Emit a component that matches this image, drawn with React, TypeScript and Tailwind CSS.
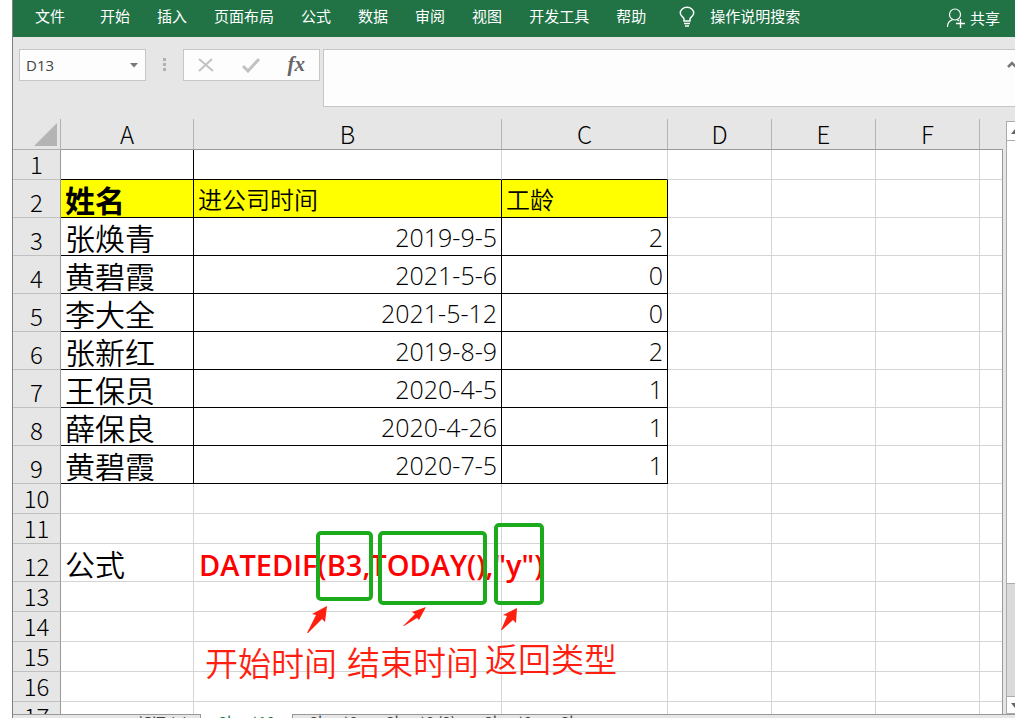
import React from 'react';

type Row = { n: number; cells?: string[]; kind?: 'head' | 'data' | 'formula' };

const menu = ['文件', '开始', '插入', '页面布局', '公式', '数据', '审阅', '视图', '开发工具', '帮助'];

const rows: Row[] = [
  { n: 1 },
  { n: 2, kind: 'head', cells: ['姓名', '进公司时间', '工龄'] },
  { n: 3, kind: 'data', cells: ['张焕青', '2019-9-5', '2'] },
  { n: 4, kind: 'data', cells: ['黄碧霞', '2021-5-6', '0'] },
  { n: 5, kind: 'data', cells: ['李大全', '2021-5-12', '0'] },
  { n: 6, kind: 'data', cells: ['张新红', '2019-8-9', '2'] },
  { n: 7, kind: 'data', cells: ['王保员', '2020-4-5', '1'] },
  { n: 8, kind: 'data', cells: ['薛保良', '2020-4-26', '1'] },
  { n: 9, kind: 'data', cells: ['黄碧霞', '2020-7-5', '1'] },
  { n: 10 },
  { n: 11 },
  { n: 12, kind: 'formula', cells: ['公式', 'DATEDIF(B3,TODAY(),"y")'] },
  { n: 13 },
  { n: 14 },
  { n: 15 },
  { n: 16 },
  { n: 17 },
];

const BulbIcon = () => (
  <svg width="16" height="22" viewBox="0 0 16 22" fill="none" stroke="currentColor" strokeWidth="1.500">
    <path d="M5 15v-2C5 11 1.300 10.500 1.300 7A6.700 5.700 0 0 1 14.700 7C14.700 10.500 11 11 11 13v2z" />
    <path d="M5 17.500h6M6 20h4" />
  </svg>
);

const ShareIcon = () => (
  <svg width="20" height="20" viewBox="0 0 20 20" fill="none" stroke="currentColor" strokeWidth="1.200">
    <circle cx="9" cy="6.500" r="5.500" />
    <path d="M1.500 19c0-4 2-6.500 5-7.200M11 11.500l2 1.500" />
    <path d="M14.500 11v9M10 15.500h9" strokeWidth="1.400" />
  </svg>
);

const MenuBar = () => (
  <nav className="flex h-[37px] shrink-0 items-start justify-between bg-[#217346] text-[15px] leading-5 text-white">
    <div className="flex items-start gap-[27px] pl-[22px] pt-[6px]">
      {menu.map((m, i) => (
        <button key={m} type="button" className={i === 0 ? 'mr-2 whitespace-nowrap' : 'whitespace-nowrap'}>
          {m}
        </button>
      ))}
      <button type="button" className="ml-[6px] flex items-start gap-[15px] whitespace-nowrap">
        <BulbIcon />
        操作说明搜索
      </button>
    </div>
    <button type="button" className="flex items-center gap-1 whitespace-nowrap pr-[15px] pt-2">
      <ShareIcon />
      共享
    </button>
  </nav>
);

const FormulaBar = () => (
  <div className="flex shrink-0 items-start bg-[#e6e6e6] pb-3 pl-[6px] pt-3">
    <div className="flex h-8 w-[127px] items-center border border-[#c6c6c6] bg-[#fdfdfd]">
      <input
        aria-label="名称框"
        defaultValue="D13"
        className="w-full min-w-0 bg-transparent pl-[6px] font-['Open_Sans','Noto_Sans_CJK_SC',sans-serif] text-[15px] text-[#444] outline-none"
      />
      <button type="button" aria-label="名称列表" className="px-[7px]">
        <svg width="8" height="5" viewBox="0 0 8 5"><path d="M0 0h8L4 4.500z" fill="#777" /></svg>
      </button>
    </div>
    <svg className="mx-4 mt-[9px]" width="5" height="14" viewBox="0 0 5 14" fill="#b1b1b1">
      <path d="M1 0h3v3H1zM1 5h3v3H1zM1 10h3v3H1z" />
    </svg>
    <div className="flex h-8 w-[137px] shrink-0 items-center justify-between border border-[#c6c6c6] bg-[#fdfdfd] px-[14px]">
      <button type="button" aria-label="取消">
        <svg width="16" height="14" viewBox="0 0 16 14" fill="none" stroke="#c2c2c2" strokeWidth="2"><path d="M1 1l14 12M14 1L1 13" /></svg>
      </button>
      <button type="button" aria-label="输入">
        <svg width="18" height="15" viewBox="0 0 18 15" fill="none" stroke="#c2c2c2" strokeWidth="3"><path d="M1 8l5 5L17 1" /></svg>
      </button>
      <button type="button" className="pb-0.5 font-['Liberation_Serif',serif] text-[21px] leading-6 font-bold italic text-[#666]">
        fx
      </button>
    </div>
    <div className="ml-[3px] flex h-[58px] grow items-start border border-r-0 border-[#c6c6c6] bg-[#fdfdfd]">
      <textarea aria-label="编辑栏" className="h-full grow resize-none bg-transparent outline-none" />
      <button type="button" aria-label="折叠编辑栏" className="mt-[11px] w-2 overflow-hidden">
        <svg width="10" height="7" viewBox="0 0 10 7" fill="none" stroke="#777" strokeWidth="2.500"><path d="M1 6l4-4 4 4" /></svg>
      </button>
    </div>
  </div>
);

const cellClass = (row: Row, col: number) => {
  const table = row.kind === 'head' || row.kind === 'data';
  if (table && col < 3) {
    return row.kind === 'head' ? 'border-r border-b border-black bg-[#ffff00]' : 'border-r border-b border-black';
  }
  if (row.n === 1) {
    if (col === 0) return 'border-r border-b border-black';
    if (col < 3) return 'border-r border-b border-r-[#d4d4d4] border-b-black';
  }
  return 'border-r border-b border-[#d4d4d4]';
};

const textClass = (row: Row, col: number) => {
  if (row.kind === 'formula') {
    return col === 0
      ? 'pl-1 text-[30px] leading-9 font-[350]'
      : "pl-[5px] font-['Open_Sans','Noto_Sans_CJK_SC',sans-serif] text-[29px] leading-10 font-semibold text-[#ff0000]";
  }
  if (col === 0) return row.kind === 'head' ? 'pl-1 text-[30px] leading-9 font-bold' : 'pl-1 text-[30px] leading-9 font-[350]';
  if (row.kind === 'head') return 'pl-1 text-[24px] leading-9 font-[350]';
  return "pr-1 text-right font-['Open_Sans','Noto_Sans_CJK_SC',sans-serif] text-[25px] leading-9";
};

const Sheet = () => (
  <table className="w-full table-fixed border-separate border-spacing-0 bg-white text-black">
    <colgroup>
      <col className="w-12" />
      <col className="w-[133px]" />
      <col className="w-[308px]" />
      <col className="w-[166px]" />
      <col className="w-[104px]" />
      <col className="w-[104px]" />
      <col className="w-[104px]" />
      <col />
    </colgroup>
    <thead>
      <tr className="h-[31px] bg-[#e6e6e6] text-[24px] leading-7">
        <td className="border-r border-b border-[#b0b0b0] p-0 pr-[3px]">
          <svg className="ml-auto" width="23" height="23" viewBox="0 0 23 23"><path d="M23 0v23H0z" fill="#b4b4b4" /></svg>
        </td>
        {['A', 'B', 'C', 'D', 'E', 'F', ''].map((c, i) => (
          <th key={i} scope="col" className="border-r border-b border-r-[#b4b4b4] border-b-[#999] p-0 font-light last:border-r-0">{c}</th>
        ))}
      </tr>
    </thead>
    <tbody>
      {rows.map((row) => (
        <tr key={row.n} className={row.kind ? 'h-[38px]' : 'h-[30px]'}>
          <th scope="row" className="border-r border-b border-r-[#999] border-b-[#c0c0c0] bg-[#e6e6e6] p-0 pb-px align-bottom text-[24px] leading-7 font-light">
            {row.n}
          </th>
          {[0, 1, 2, 3, 4, 5, 6].map((col) => (
            <td key={col} className={`p-0 last:border-r-0 ${cellClass(row, col)}`}>
              {row.cells?.[col] && (
                <div className={`h-9 whitespace-nowrap ${textClass(row, col)}`}>{row.cells[col]}</div>
              )}
            </td>
          ))}
        </tr>
      ))}
    </tbody>
  </table>
);

// Boxes, arrows and captions drawn freely over the grid
const Notes = () => (
  <div className="pointer-events-none absolute left-0 top-0 text-[33px] leading-10 font-[350] text-[#ff1e10]">
    <svg className="absolute left-[180px] top-[379px]" width="380" height="150" viewBox="193 498 380 150">
      <g fill="none" stroke="#1cab1c" strokeWidth="4">
        <rect x="318" y="533" width="53" height="66" rx="3" />
        <rect x="380" y="533" width="105" height="70" rx="3" />
        <rect x="496" y="525" width="46" height="78" rx="3" />
      </g>
      <g fill="#ff1e10">
        <path d="M307 633l9-18-4-1 15-8-2 16-3-3-14 14z" />
        <path d="M403 626l12-12-3-2 14-5-7 13-2-2-13 8z" />
        <path d="M501 630l6-14-4-1 14-7-1 15-3-3-11 10z" />
      </g>
    </svg>
    <span className="absolute left-[192px] top-[523px] whitespace-nowrap">开始时间</span>
    <span className="absolute left-[334px] top-[522px] whitespace-nowrap">结束时间</span>
    <span className="absolute left-[472px] top-[519px] whitespace-nowrap">返回类型</span>
  </div>
);

const ScrollBar = () => (
  <div className="mt-0.5 flex w-[9px] shrink-0 flex-col overflow-hidden border-l border-[#ababab] bg-[#dadada]">
    <button type="button" aria-label="向上滚动" className="h-5 shrink-0 border-y border-[#ababab] bg-white pl-1">
      <svg width="8" height="5" viewBox="0 0 8 5"><path d="M0 5h8L4 0z" fill="#666" /></svg>
    </button>
    <div className="h-[443px] border-b border-[#ababab] bg-white" />
    <button type="button" aria-label="向下滚动" className="mt-auto h-[18px] shrink-0 border-y border-[#ababab] bg-white pl-1">
      <svg width="8" height="5" viewBox="0 0 8 5"><path d="M0 0h8L4 5z" fill="#666" /></svg>
    </button>
  </div>
);

const SheetTabs = () => (
  <div className="flex h-1 shrink-0 items-start overflow-hidden bg-[#e6e6e6] text-[15px] leading-[14px] text-[#444]">
    <button type="button" className="h-4 w-[188px] border-t border-r border-[#999] pr-3 text-right">部门 (2)</button>
    <button type="button" className="h-4 w-[92px] border-r border-[#999] bg-white text-[#217346]">Sheet10</button>
    <div className="flex h-4 grow items-start gap-7 border-t border-[#999] pl-4">
      <button type="button">Sheet8</button>
      <button type="button">Sheet8 (2)</button>
      <button type="button">Sheet9</button>
      <button type="button">Sh ...</button>
    </div>
  </div>
);

const App: React.FC = () => {
  return (
    <div className="h-screen overflow-hidden bg-white pl-3 font-['Noto_Sans_CJK_SC',sans-serif]">
      <div className="flex h-full flex-col border-l border-[#808080]">
        <MenuBar />
        <FormulaBar />
        <main className="flex min-h-0 grow bg-[#e6e6e6]">
          <div className="relative min-w-0 grow overflow-hidden font-light">
            <Sheet />
            <Notes />
          </div>
          <div className="mt-[30px] w-1 shrink-0 border-l border-[#999]" />
          <ScrollBar />
        </main>
        <SheetTabs />
      </div>
    </div>
  );
};

export default App;
